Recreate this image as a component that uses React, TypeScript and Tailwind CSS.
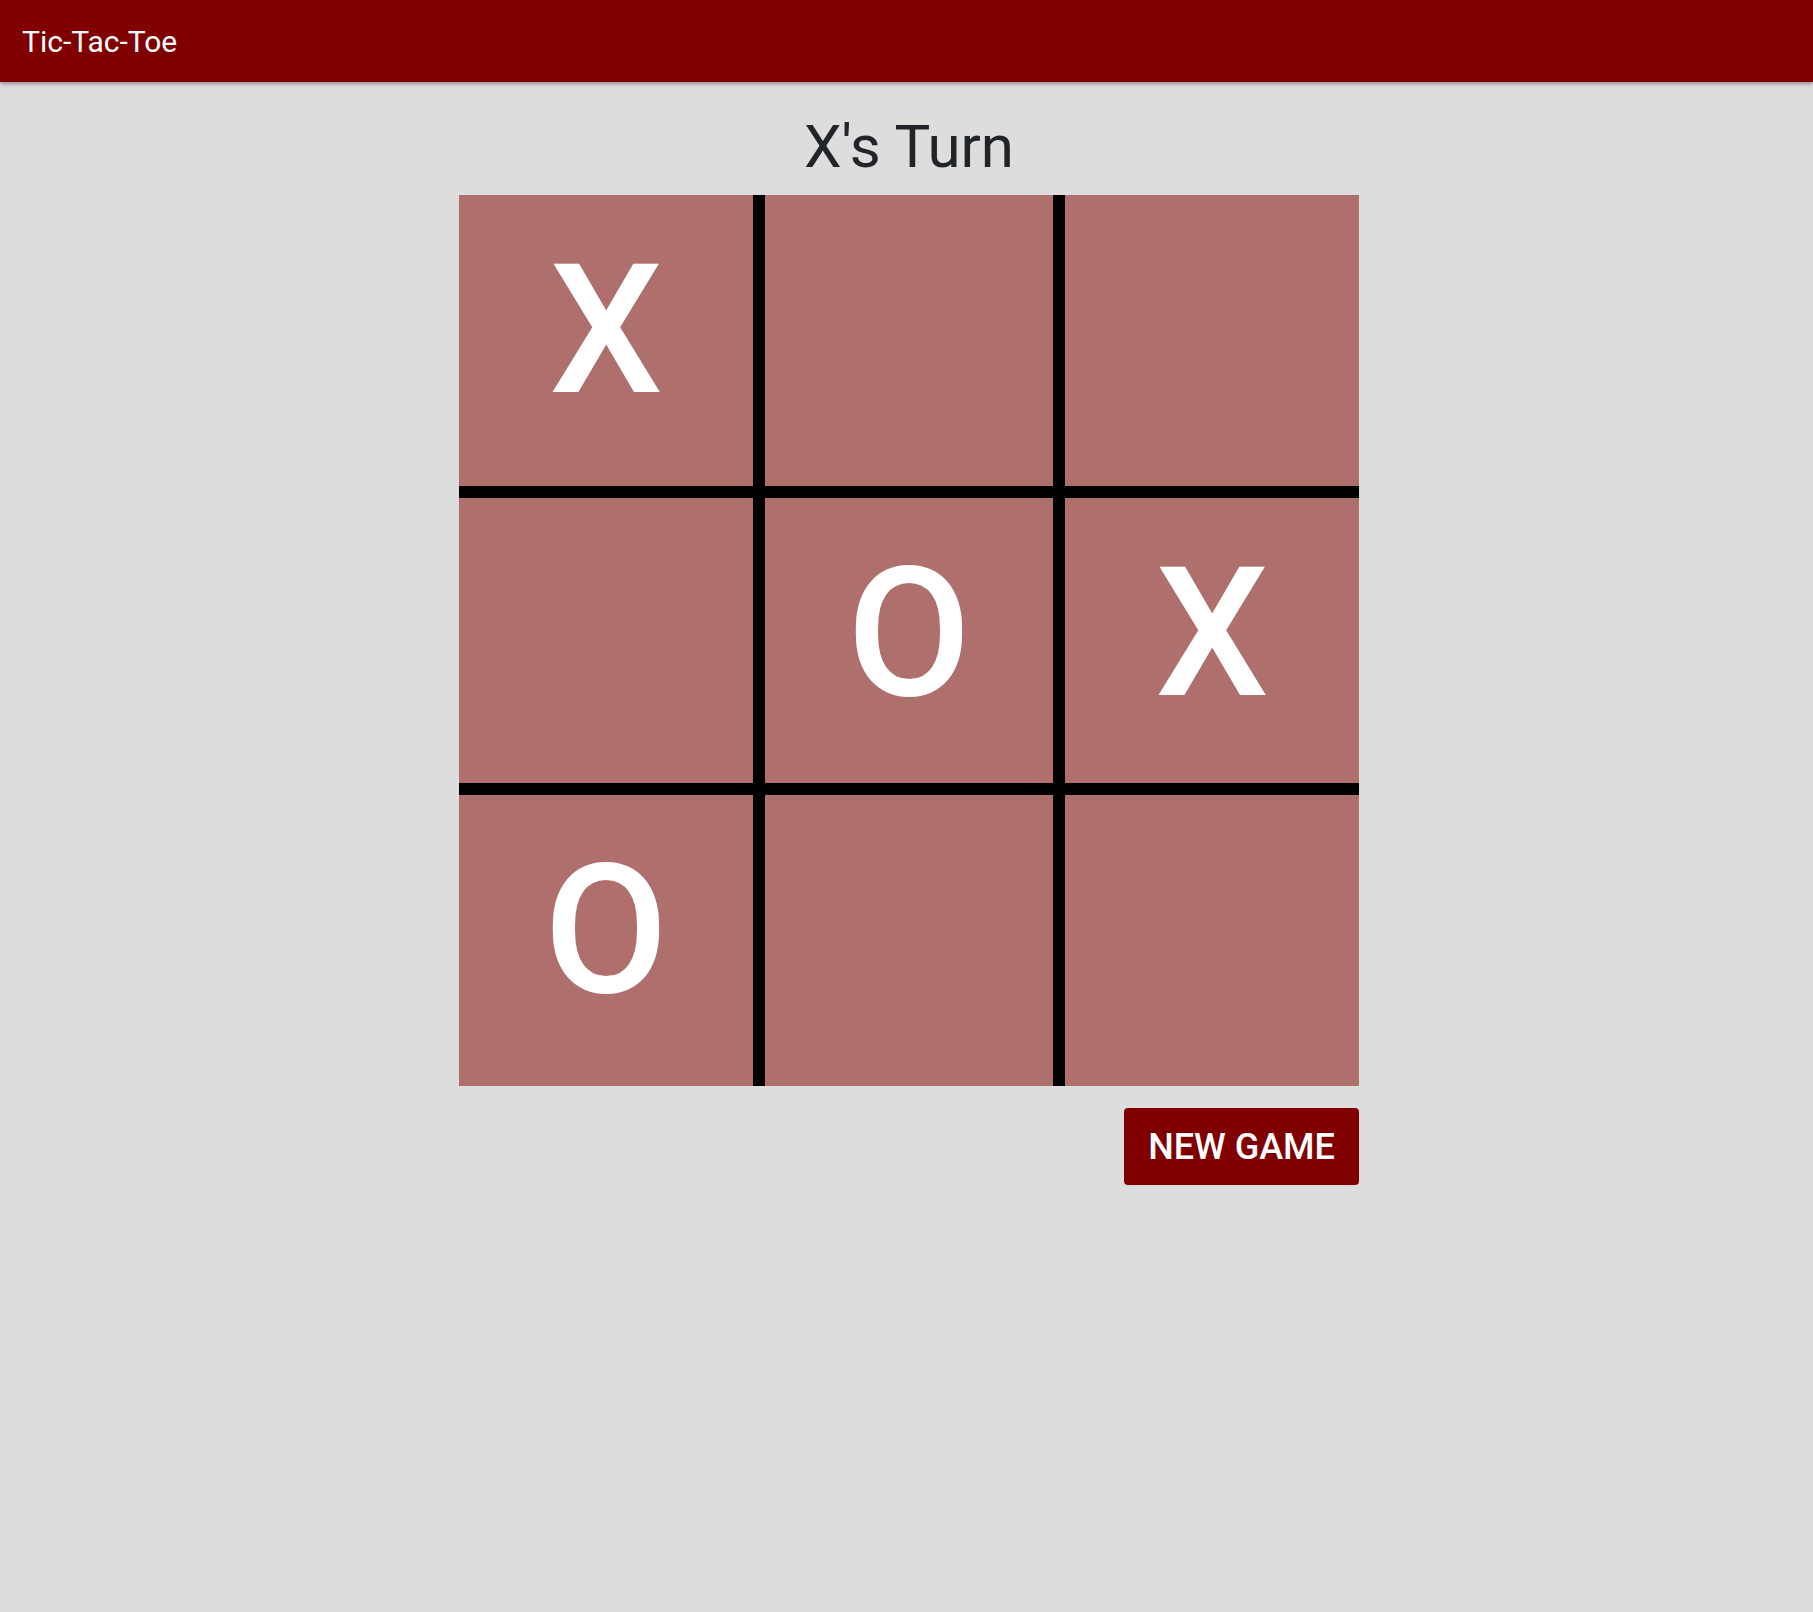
import { useState } from "react";

type Mark = "X" | "O" | null;

const start: Mark[] = ["X", null, null, null, "O", "X", "O", null, null];

// border for each cell so the lines fall between them
const cellBorders = [
  "border-r-[6px] border-b-[6px]",
  "border-x-[6px] border-b-[6px]",
  "border-l-[6px] border-b-[6px]",
  "border-r-[6px] border-y-[6px]",
  "border-[6px]",
  "border-l-[6px] border-y-[6px]",
  "border-r-[6px] border-t-[6px]",
  "border-x-[6px] border-t-[6px]",
  "border-l-[6px] border-t-[6px]",
];

const Cell = ({ value, index, onClick }: { value: Mark; index: number; onClick: () => void }) => (
  <div
    onClick={onClick}
    className={`flex justify-center items-start pt-[46px] h-[297px] bg-[#ae6f6d] border-black cursor-pointer ${cellBorders[index]}`}
  >
    <span className="text-[180px] leading-none font-medium text-white select-none">{value}</span>
  </div>
);

export default function App() {
  const [cells, setCells] = useState<Mark[]>(start);
  const [turn, setTurn] = useState<"X" | "O">("X");

  const play = (i: number) => {
    if (cells[i]) return;
    const next = [...cells];
    next[i] = turn;
    setCells(next);
    setTurn(turn === "X" ? "O" : "X");
  };

  const reset = () => {
    setCells(Array(9).fill(null));
    setTurn("X");
  };

  return (
    <div className="min-h-[1612px] bg-[#dddddd] font-['Roboto',sans-serif]">
      <header className="h-[82px] flex items-center px-[22px] bg-[#800000] shadow-[0_2px_4px_rgba(0,0,0,0.35)]">
        <h1 className="text-[30px] text-white font-normal">Tic-Tac-Toe</h1>
      </header>
      <main className="flex justify-center pl-[5px]">
        <div className="w-[900px] flex flex-col">
          <h2 className="mt-[30px] mb-[13px] text-center text-[60px] leading-[70px] text-[#212529] font-normal">
            {turn}'s Turn
          </h2>
          <div className="grid grid-cols-3">
            {cells.map((v, i) => (
              <Cell key={i} value={v} index={i} onClick={() => play(i)} />
            ))}
          </div>
          <div className="flex justify-end mt-[22px]">
            <button
              onClick={reset}
              className="w-[235px] h-[77px] rounded-[4px] bg-[#800000] text-white text-[36px] font-medium"
            >
              NEW GAME
            </button>
          </div>
        </div>
      </main>
    </div>
  );
}
